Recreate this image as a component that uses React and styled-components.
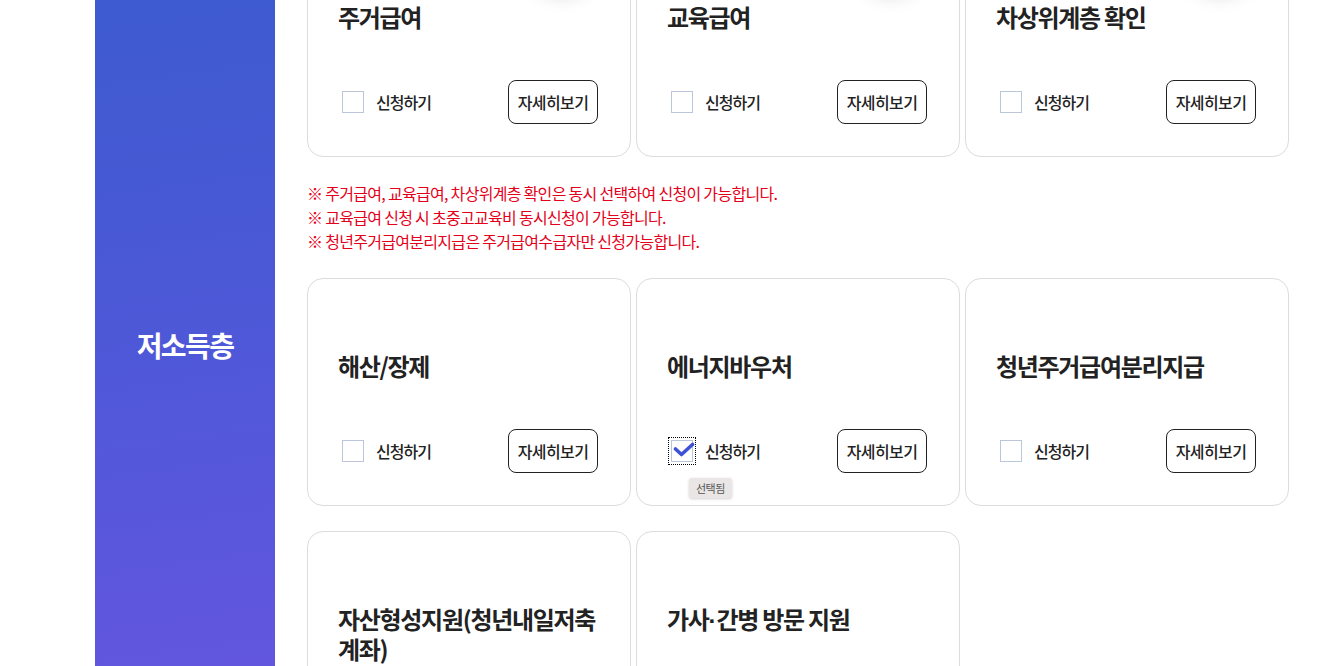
import React, { useState } from "react";
import styled, { createGlobalStyle } from "styled-components";

const benefitsTop = [
  { id: "housing", title: "주거급여" },
  { id: "edu", title: "교육급여" },
  { id: "near", title: "차상위계층 확인" },
];

const benefitsRest = [
  { id: "funeral", title: "해산/장제" },
  { id: "energy", title: "에너지바우처" },
  { id: "youth", title: "청년주거급여분리지급" },
  { id: "asset", title: "자산형성지원(청년내일저축계좌)" },
  { id: "care", title: "가사·간병 방문 지원" },
];

const notes = [
  "※ 주거급여, 교육급여, 차상위계층 확인은 동시 선택하여 신청이 가능합니다.",
  "※ 교육급여 신청 시 초중고교육비 동시신청이 가능합니다.",
  "※ 청년주거급여분리지급은 주거급여수급자만 신청가능합니다.",
];

// the CJK font draws "·" full width, so set it in a latin font
function titleText(t) {
  const parts = t.split("·");
  return parts.map((p, i) => (
    <React.Fragment key={i}>
      {i > 0 && <Dot>·</Dot>}
      {p}
    </React.Fragment>
  ));
}

function BenefitCard({ item, withIcon, checked, onToggle }) {
  return (
    <Card>
      {withIcon && <IconBubble />}
      <Title>{titleText(item.title)}</Title>
      <Actions>
        <CheckLabel>
          <HiddenInput
            type="checkbox"
            checked={checked}
            onChange={() => onToggle(item.id)}
          />
          <Box $checked={checked}>
            {checked && (
              <svg width="22" height="16" viewBox="0 0 22 16">
                <path
                  d="M2.5 7 L8.5 12.5 L19.5 2.5"
                  fill="none"
                  stroke="#3d52d5"
                  strokeWidth="3.6"
                  strokeLinecap="round"
                  strokeLinejoin="round"
                />
              </svg>
            )}
            {checked && <Tip>선택됨</Tip>}
          </Box>
          신청하기
        </CheckLabel>
        <DetailButton type="button">자세히보기</DetailButton>
      </Actions>
    </Card>
  );
}

export default function App() {
  const [selected, setSelected] = useState({ energy: true });
  const toggle = (id) => setSelected((s) => ({ ...s, [id]: !s[id] }));

  return (
    <>
      <GlobalStyle />
      <Section>
        <Side>
          <SideTitle>저소득층</SideTitle>
        </Side>
        <Content>
          <Grid>
            {benefitsTop.map((b) => (
              <BenefitCard
                key={b.id}
                item={b}
                withIcon
                checked={!!selected[b.id]}
                onToggle={toggle}
              />
            ))}
          </Grid>
          <Notes>
            {notes.map((n) => (
              <li key={n}>{n}</li>
            ))}
          </Notes>
          <Grid>
            {benefitsRest.map((b) => (
              <BenefitCard
                key={b.id}
                item={b}
                checked={!!selected[b.id]}
                onToggle={toggle}
              />
            ))}
          </Grid>
        </Content>
      </Section>
    </>
  );
}

const GlobalStyle = createGlobalStyle`
  html, body {
    margin: 0;
    background: #fff;
    overflow: hidden;
  }
  body {
    font-family: "Noto Sans CJK KR", "Noto Sans", sans-serif;
    color: #222;
  }
`;

// page is shown scrolled down by 71px
const Section = styled.section`
  display: flex;
  margin-top: -71px;
  padding-left: 95px;
  gap: 32px;
`;

const Side = styled.aside`
  width: 180px;
  flex-shrink: 0;
  display: flex;
  align-items: center;
  justify-content: center;
  padding-bottom: 30px;
  background: linear-gradient(172deg, #3a5bcf 0%, #4f58d8 50%, #6a55e1 100%);
`;

const SideTitle = styled.h2`
  margin: 0;
  color: #fff;
  font-size: 28px;
  font-weight: 700;
  letter-spacing: -1.6px;
`;

const Content = styled.div`
  width: 982px;
  padding-bottom: 2px;
`;

const Grid = styled.div`
  display: grid;
  grid-template-columns: repeat(3, 324px);
  column-gap: 5px;
  row-gap: 25px;
`;

const Card = styled.div`
  position: relative;
  display: flex;
  flex-direction: column;
  border: 1px solid #dcdcdc;
  border-radius: 16px;
  padding: 72px 32px 32px 30px;
  background: #fff;
`;

const IconBubble = styled.span`
  position: absolute;
  top: -8px;
  right: 36px;
  width: 64px;
  height: 60px;
  border-radius: 50%;
  background: #fff;
  box-shadow: 0 12px 20px rgba(0, 0, 0, 0.2);
`;

const Title = styled.h3`
  margin: 0 -8px 0 0;
  font-size: 24px;
  line-height: 30px;
  font-weight: 700;
  letter-spacing: -1.3px;
  color: #222;
`;

const Dot = styled.span`
  font-family: "Liberation Sans", sans-serif;
  letter-spacing: 0;
`;

const Actions = styled.div`
  margin-top: 48px;
  display: flex;
  align-items: center;
  justify-content: space-between;
`;

const CheckLabel = styled.label`
  display: flex;
  align-items: center;
  gap: 12px;
  margin-left: 4px;
  font-size: 16px;
  font-weight: 500;
  letter-spacing: -1px;
  color: #222;
  cursor: pointer;
`;

const HiddenInput = styled.input`
  position: absolute;
  opacity: 0;
  width: 0;
  height: 0;
`;

const Box = styled.span`
  position: relative;
  width: 22px;
  height: 22px;
  box-sizing: border-box;
  border: 1px solid #bcc6da;
  background: #fff;
  display: flex;
  align-items: center;
  justify-content: center;
  outline: ${(p) => (p.$checked ? "1px dotted #000" : "none")};
  outline-offset: 2px;
  svg {
    margin-left: 3px;
    margin-top: -3px;
    flex-shrink: 0;
  }
`;

const Tip = styled.span`
  position: absolute;
  top: 37px;
  left: 17px;
  padding: 2px 7px;
  font-size: 11px;
  line-height: 16px;
  font-weight: 400;
  letter-spacing: -0.5px;
  color: #555;
  background: #ebe6e6;
  border-radius: 3px;
  box-shadow: 0 1px 3px rgba(0, 0, 0, 0.18);
  white-space: nowrap;
`;

const DetailButton = styled.button`
  width: 90px;
  height: 44px;
  border: 1px solid #222;
  border-radius: 8px;
  background: #fff;
  font-family: inherit;
  font-size: 16px;
  font-weight: 500;
  letter-spacing: -0.6px;
  color: #222;
  padding: 0;
  cursor: pointer;
`;

const Notes = styled.ul`
  list-style: none;
  margin: 24px 0 25px;
  padding: 0;
  li {
    font-size: 16px;
    line-height: 24px;
    letter-spacing: -0.7px;
    color: #e4001a;
  }
`;
